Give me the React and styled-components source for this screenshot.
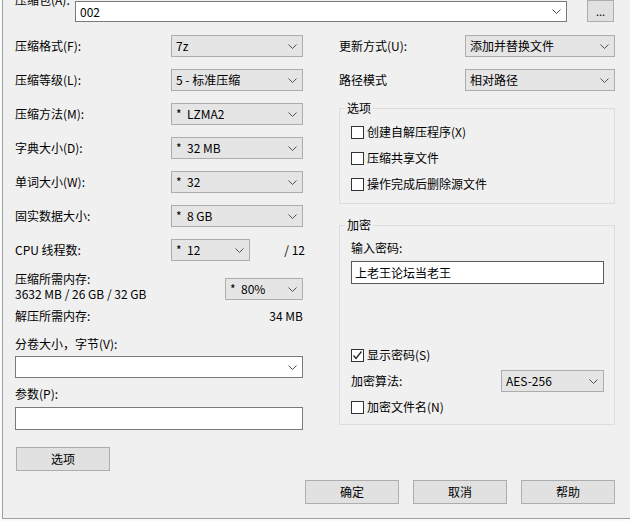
import styled, { createGlobalStyle } from "styled-components";

const GlobalStyle = createGlobalStyle`
  html, body {
    margin: 0;
    padding: 0;
    background: #fafafa;
    overflow: hidden;
  }
  body {
    font-family: "Noto Sans CJK SC", "Microsoft YaHei", sans-serif;
    font-size: 12px;
    color: #000;
  }
`;

function Chevron() {
  return (
    <svg width="9" height="5" viewBox="0 0 9 5">
      <polyline points="0.5,0.5 4.5,4.5 8.5,0.5" fill="none" stroke="#505050" strokeWidth="1" />
    </svg>
  );
}

function Drop({ w, edit, children }) {
  return (
    <DropBox $w={w} $edit={edit}>
      <span>{children}</span>
      <Chevron />
    </DropBox>
  );
}

function Check({ checked, children }) {
  return (
    <CheckRow>
      <Box>
        {checked && (
          <svg width="11" height="11" viewBox="0 0 11 11">
            <polyline points="1.5,5.5 4,8.5 9.5,1.5" fill="none" stroke="#222" strokeWidth="1.3" />
          </svg>
        )}
      </Box>
      <span>{children}</span>
    </CheckRow>
  );
}

export default function App() {
  return (
    <>
      <GlobalStyle />
      <Dialog>
        <TopRow>
          <TopLabel>压缩包(A):</TopLabel>
          <DropBox $w={492} $h={21} $edit $top={9}>
            <span>002</span>
            <Chevron />
          </DropBox>
          <BrowseButton>...</BrowseButton>
        </TopRow>

        <Main>
          <LeftCol>
            <FieldRow>
              <Label $w={156}>压缩格式(F):</Label>
              <Drop w={132}>7z</Drop>
            </FieldRow>
            <FieldRow>
              <Label $w={156}>压缩等级(L):</Label>
              <Drop w={132}>5 - 标准压缩</Drop>
            </FieldRow>
            <FieldRow>
              <Label $w={156}>压缩方法(M):</Label>
              <Drop w={132}>*&nbsp; LZMA2</Drop>
            </FieldRow>
            <FieldRow>
              <Label $w={156}>字典大小(D):</Label>
              <Drop w={132}>*&nbsp; 32 MB</Drop>
            </FieldRow>
            <FieldRow>
              <Label $w={156}>单词大小(W):</Label>
              <Drop w={132}>*&nbsp; 32</Drop>
            </FieldRow>
            <FieldRow>
              <Label $w={156}>固实数据大小:</Label>
              <Drop w={132}>*&nbsp; 8 GB</Drop>
            </FieldRow>
            <FieldRow $last>
              <Label $w={156}>CPU 线程数:</Label>
              <Drop w={79}>*&nbsp; 12</Drop>
              <RightText>/ 12</RightText>
            </FieldRow>

            <MemBlock>
              <MemText>
                <MemLine>压缩所需内存:</MemLine>
                <MemLine>3632 MB / 26 GB / 32 GB</MemLine>
              </MemText>
              <MemDrop>
                <Drop w={78}>*&nbsp; 80%</Drop>
              </MemDrop>
            </MemBlock>

            <InfoRow>
              <span>解压所需内存:</span>
              <span>34 MB</span>
            </InfoRow>

            <StackLabel $top={12}>分卷大小，字节(V):</StackLabel>
            <DropBox $w={288} $edit $top={4}>
              <span />
              <Chevron />
            </DropBox>

            <StackLabel $top={8}>参数(P):</StackLabel>
            <TextField $w={288} $top={5} $border="#7a7a7a" />

            <Button $top={17} $left={1}>选项</Button>
          </LeftCol>

          <RightCol>
            <FieldRow>
              <Label $w={126}>更新方式(U):</Label>
              <Drop w={150}>添加并替换文件</Drop>
            </FieldRow>
            <FieldRow $last>
              <Label $w={126}>路径模式</Label>
              <Drop w={150}>相对路径</Drop>
            </FieldRow>

            <Group $top={9}>
              <Legend>选项</Legend>
              <GroupBody $pt={3} $pb={6}>
                <Check>创建自解压程序(X)</Check>
                <Check>压缩共享文件</Check>
                <Check>操作完成后删除源文件</Check>
              </GroupBody>
            </Group>

            <Group $top={13}>
              <Legend>加密</Legend>
              <GroupBody $pt={7} $pb={4}>
                <StackLabel>输入密码:</StackLabel>
                <TextField $w={253} $h={23} $top={5} $border="#5a5a5a">
                  上老王论坛当老王
                </TextField>
                <Spacer />
                <Check checked>显示密码(S)</Check>
                <AlgoRow>
                  <span>加密算法:</span>
                  <Drop w={103}>AES-256</Drop>
                </AlgoRow>
                <Check>加密文件名(N)</Check>
              </GroupBody>
            </Group>
          </RightCol>
        </Main>

        <ButtonRow>
          <Button>确定</Button>
          <Button>取消</Button>
          <Button>帮助</Button>
        </ButtonRow>
      </Dialog>
    </>
  );
}

const Dialog = styled.div`
  box-sizing: border-box;
  display: flex;
  flex-direction: column;
  width: 640px;
  height: 527px;
  margin: -8px 0 0 2px;
  padding-left: 12px;
  background: #f0f0f0;
  border-left: 1px solid #a0a0a0;
  border-bottom: 1px solid #a0a0a0;
  line-height: 16px;
`;

const TopRow = styled.div`
  display: flex;
  align-items: flex-start;
`;

const TopLabel = styled.div`
  width: 60px;
  flex-shrink: 0;
`;

const DropBox = styled.div`
  box-sizing: border-box;
  display: flex;
  align-items: center;
  justify-content: space-between;
  flex-shrink: 0;
  width: ${(p) => p.$w}px;
  height: ${(p) => p.$h || 22}px;
  margin-top: ${(p) => p.$top || 0}px;
  padding: 0 5px 0 4px;
  background: ${(p) => (p.$edit ? "#fff" : "#e5e5e5")};
  border: 1px solid ${(p) => (p.$edit ? "#7a7a7a" : "#adadad")};
  white-space: nowrap;
`;

const BrowseButton = styled.div`
  box-sizing: border-box;
  width: 27px;
  height: 22px;
  margin: 8px 0 0 20px;
  display: flex;
  align-items: center;
  justify-content: center;
  background: #e1e1e1;
  border: 1px solid #adadad;
  font-size: 11px;
`;

const Main = styled.div`
  display: flex;
  gap: 36px;
  margin-top: 13px;
  width: 600px;
`;

const LeftCol = styled.div`
  display: flex;
  flex-direction: column;
  width: 288px;
`;

const RightCol = styled.div`
  display: flex;
  flex-direction: column;
  width: 276px;
`;

const FieldRow = styled.div`
  display: flex;
  align-items: center;
  height: 22px;
  margin-bottom: ${(p) => (p.$last ? 0 : 12)}px;
  white-space: nowrap;
`;

const Label = styled.span`
  width: ${(p) => p.$w}px;
  flex-shrink: 0;
`;

const RightText = styled.span`
  flex: 1;
  text-align: right;
  margin-right: -2px;
`;

const MemBlock = styled.div`
  display: flex;
  justify-content: space-between;
  align-items: flex-start;
  margin-top: 10px;
`;

const MemText = styled.div`
  display: flex;
  flex-direction: column;
  white-space: nowrap;
`;

const MemLine = styled.div`
  height: 15px;
  line-height: 15px;
`;

const MemDrop = styled.div`
  margin-top: 7px;
`;

const InfoRow = styled.div`
  display: flex;
  justify-content: space-between;
  margin-top: 7px;
`;

const StackLabel = styled.div`
  margin-top: ${(p) => p.$top || 0}px;
  white-space: nowrap;
`;

const TextField = styled.div`
  box-sizing: border-box;
  width: ${(p) => p.$w}px;
  height: ${(p) => p.$h || 23}px;
  margin-top: ${(p) => p.$top || 0}px;
  padding-left: 3px;
  display: flex;
  align-items: center;
  background: #fff;
  border: 1px solid ${(p) => p.$border};
`;

const Button = styled.div`
  box-sizing: border-box;
  width: 94px;
  height: 24px;
  margin-top: ${(p) => p.$top || 0}px;
  margin-left: ${(p) => p.$left || 0}px;
  display: flex;
  align-items: center;
  justify-content: center;
  background: #e1e1e1;
  border: 1px solid #adadad;
`;

const Group = styled.fieldset`
  margin: ${(p) => p.$top}px 0 0 0;
  padding: 0;
  min-width: 0;
  border: 1px solid #dcdcdc;
`;

const Legend = styled.legend`
  margin-left: 5px;
  padding: 0 2px;
  line-height: 16px;
`;

const GroupBody = styled.div`
  display: flex;
  flex-direction: column;
  padding: ${(p) => p.$pt}px 10px ${(p) => p.$pb}px 11px;
`;

const CheckRow = styled.div`
  display: flex;
  align-items: center;
  gap: 3px;
  height: 26px;
  white-space: nowrap;
`;

const Box = styled.span`
  box-sizing: border-box;
  width: 13px;
  height: 13px;
  display: flex;
  align-items: center;
  justify-content: center;
  background: #fff;
  border: 1px solid #333;
`;

const Spacer = styled.div`
  height: 58px;
`;

const AlgoRow = styled.div`
  display: flex;
  align-items: center;
  justify-content: space-between;
  height: 22px;
  margin: 2px 0;
`;

const ButtonRow = styled.div`
  display: flex;
  justify-content: flex-end;
  gap: 14px;
  width: 600px;
  margin-top: 9px;
`;
